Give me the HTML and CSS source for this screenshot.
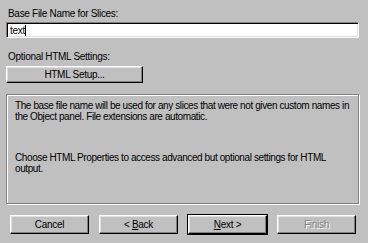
FILE: index.html
```html
<!DOCTYPE html>
<html>
<head>
<meta charset="utf-8">
<link rel="stylesheet" href="styles.css">
</head>
<body>
<div class="dialog">
  <div class="label">Base File Name for Slices:</div>
  <div class="input"><span class="value">text</span><span class="caret"></span></div>
  <div class="label label-opt">Optional HTML Settings:</div>
  <div class="btn btn-setup">HTML Setup...</div>
  <div class="panel">
    <p class="para">The base file name will be used for any slices that were not given custom names in the Object panel. File extensions are automatic.</p>
    <p class="para">Choose HTML Properties to access advanced but optional settings for HTML<br>output.</p>
  </div>
  <div class="footer">
    <div class="btn"><span>Cancel</span></div>
    <div class="btn"><span>&lt; <u>B</u>ack</span></div>
    <div class="btn btn-default"><span><u>N</u>ext &gt;</span></div>
    <div class="btn btn-disabled"><span>Finish</span></div>
  </div>
</div>
</body>
</html>
```
FILE: styles.css
```css
html, body {
  margin: 0;
  padding: 0;
  background: #c0c0c0;
}
body {
  width: 368px;
  height: 243px;
  overflow: hidden;
  font-family: "Liberation Sans", Arial, sans-serif;
  font-size: 10px;
  letter-spacing: -0.3px;
  line-height: 11px;
  color: #000;
}
.dialog {
  display: flex;
  flex-direction: column;
  padding: 8px 9px 0 6px;
}
.label {
  padding-left: 2px;
  height: 12px;
}
.input {
  margin-top: 2px;
  height: 16px;
  box-sizing: border-box;
  background: #fff;
  border-top: 1px solid #808080;
  border-left: 1px solid #808080;
  border-right: 1px solid #fff;
  border-bottom: 1px solid #fff;
  box-shadow: inset 1px 1px 0 #000, inset -1px -1px 0 #dfdfdf;
  display: flex;
  align-items: center;
  padding-left: 3px;
}
.caret {
  width: 1px;
  height: 11px;
  background: #000;
}
.label-opt {
  margin-top: 13px;
}
.btn {
  box-sizing: border-box;
  height: 19px;
  width: 79px;
  display: flex;
  align-items: center;
  justify-content: center;
  background: #c0c0c0;
  border-top: 1px solid #fff;
  border-left: 1px solid #fff;
  border-right: 1px solid #000;
  border-bottom: 1px solid #000;
  box-shadow: inset -1px -1px 0 #808080, inset 1px 1px 0 #dfdfdf;
}
.btn-setup {
  margin-top: 3px;
  width: 137px;
  height: 17px;
}
.panel {
  margin-top: 11px;
  height: 110px;
  box-sizing: border-box;
  border: 1px solid #808080;
  box-shadow: inset 1px 1px 0 #fff, 1px 1px 0 #fff;
  padding: 5px 0 0 8px;
}
.para {
  margin: 0 0 30px 0;
  letter-spacing: -0.4px;
}
.footer {
  margin-top: 11px;
  display: flex;
  gap: 10px;
  padding-left: 4px;
}
.btn-default {
  outline: 1px solid #000;
}
.btn-disabled {
  color: #808080;
  text-shadow: 1px 1px 0 #fff;
}
```
